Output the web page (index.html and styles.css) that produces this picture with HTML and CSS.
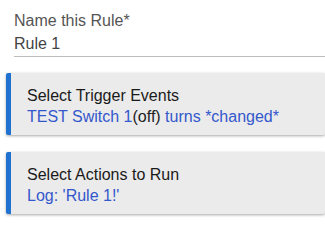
FILE: index.html
```html
<!DOCTYPE html>
<html>
<head>
<meta charset="utf-8">
<link rel="stylesheet" href="styles.css">
</head>
<body>
<div class="field">
  <div class="field-label">Name this Rule*</div>
  <div class="field-value">Rule 1</div>
</div>
<div class="card">
  <div class="card-title">Select Trigger Events</div>
  <div class="card-link">TEST Switch 1<span class="state">(off)</span> turns *changed*</div>
</div>
<div class="card">
  <div class="card-title">Select Actions to Run</div>
  <div class="card-link">Log: 'Rule 1!'</div>
</div>
</body>
</html>
```
FILE: styles.css
```css
html, body {
  margin: 0;
  padding: 0;
  background: #ffffff;
  overflow: hidden;
}
body {
  font-family: "Liberation Sans", Arial, sans-serif;
  font-size: 16px;
  width: 325px;
  height: 230px;
}
.field {
  margin-left: 14px;
  padding-top: 9px;
  padding-bottom: 1px;
  border-bottom: 1px solid #bdbdbd;
  line-height: 23px;
  color: #555555;
}
.field-value {
  color: #444444;
}
.card {
  margin: 16px 0 0 6px;
  padding: 12px 0 8px 16px;
  background: #ebebeb;
  border-left: 5px solid #1f72cf;
  border-radius: 2px;
  box-shadow: 0 1px 3px rgba(0, 0, 0, 0.35);
  line-height: 21px;
}
.card + .card {
  margin-top: 17px;
}
.card-title {
  color: #1a1a1a;
}
.card-link {
  color: #3358cc;
}
.state {
  color: #222222;
}
```
